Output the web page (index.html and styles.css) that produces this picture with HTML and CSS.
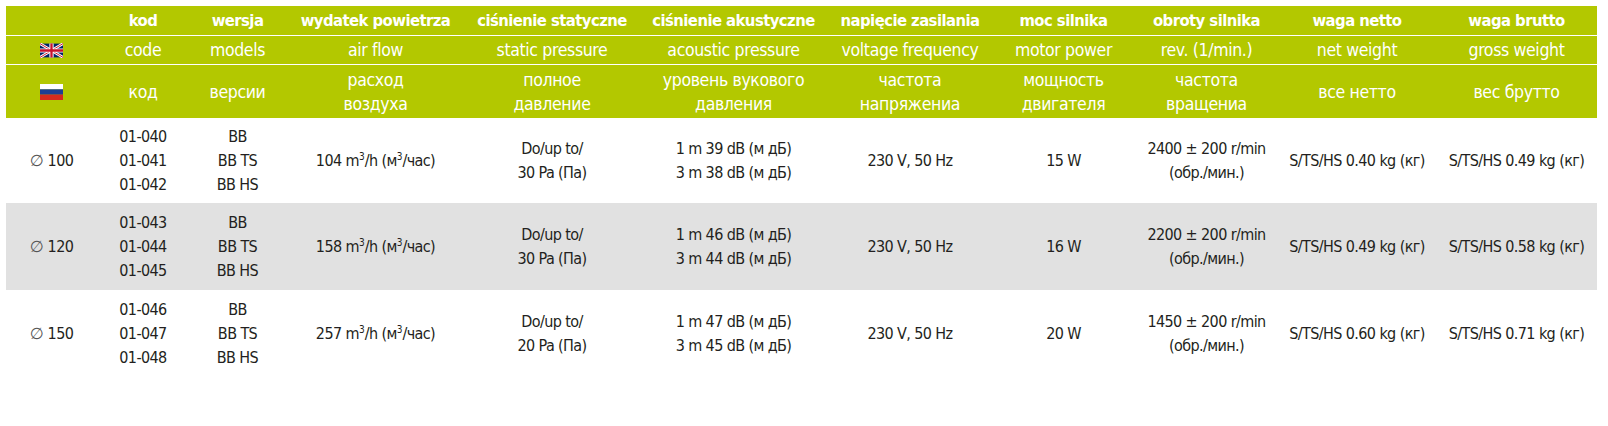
FILE: index.html
```html
<!DOCTYPE html>
<html lang="pl">
<head>
<meta charset="utf-8">
<title>Dane techniczne</title>
<link rel="stylesheet" href="styles.css">
</head>
<body>
<table class="spec">
  <colgroup>
    <col class="c-flag"><col class="c-kod"><col class="c-ver"><col class="c-air"><col class="c-stat"><col class="c-ac"><col class="c-volt"><col class="c-pow"><col class="c-rev"><col class="c-net"><col class="c-gross">
  </colgroup>
  <thead>
    <tr class="h-pl">
      <th></th><th>kod</th><th>wersja</th><th>wydatek powietrza</th><th>ciśnienie statyczne</th><th>ciśnienie akustyczne</th><th>napięcie zasilania</th><th>moc silnika</th><th>obroty silnika</th><th>waga netto</th><th>waga brutto</th>
    </tr>
    <tr class="h-en">
      <th>
        <svg class="flag" viewBox="0 0 60 36" width="23" height="15" aria-hidden="true">
          <rect width="60" height="36" fill="#012169"/>
          <path d="M0,0 L60,36 M60,0 L0,36" stroke="#fff" stroke-width="7"/>
          <path d="M0,0 L60,36 M60,0 L0,36" stroke="#c8102e" stroke-width="2.5"/>
          <path d="M30,0 V36 M0,18 H60" stroke="#fff" stroke-width="11"/>
          <path d="M30,0 V36 M0,18 H60" stroke="#c8102e" stroke-width="6"/>
        </svg>
      </th>
      <th>code</th><th>models</th><th>air flow</th><th>static pressure</th><th>acoustic pressure</th><th>voltage frequency</th><th>motor power</th><th>rev. (1/min.)</th><th>net weight</th><th>gross weight</th>
    </tr>
    <tr class="h-ru">
      <th>
        <svg class="flag" viewBox="0 0 23 16" width="23" height="16" aria-hidden="true">
          <rect width="23" height="5.4" fill="#ffffff"/>
          <rect y="5.3" width="23" height="5.4" fill="#1c3f94"/>
          <rect y="10.6" width="23" height="5.4" fill="#d52b1e"/>
        </svg>
      </th>
      <th>код</th><th>версии</th><th>расход<br>воздуха</th><th>полное<br>давление</th><th>уровень вукового<br>давления</th><th>частота<br>напряжениа</th><th>мощность<br>двигателя</th><th>частота<br>вращениа</th><th>все нетто</th><th>вес брутто</th>
    </tr>
  </thead>
  <tbody>
    <tr class="r1">
      <td><span class="dia">∅</span> 100</td>
      <td>01-040<br>01-041<br>01-042</td>
      <td>BB<br>BB TS<br>BB HS</td>
      <td>104 m<sup>3</sup>/h (м<sup>3</sup>/час)</td>
      <td>Do/up to/<br>30 Pa (Па)</td>
      <td>1 m 39 dB (м дБ)<br>3 m 38 dB (м дБ)</td>
      <td>230 V, 50 Hz</td>
      <td>15 W</td>
      <td>2400 ± 200 r/min<br>(обр./мин.)</td>
      <td>S/TS/HS 0.40 kg (кг)</td>
      <td>S/TS/HS 0.49 kg (кг)</td>
    </tr>
    <tr class="alt">
      <td><span class="dia">∅</span> 120</td>
      <td>01-043<br>01-044<br>01-045</td>
      <td>BB<br>BB TS<br>BB HS</td>
      <td>158 m<sup>3</sup>/h (м<sup>3</sup>/час)</td>
      <td>Do/up to/<br>30 Pa (Па)</td>
      <td>1 m 46 dB (м дБ)<br>3 m 44 dB (м дБ)</td>
      <td>230 V, 50 Hz</td>
      <td>16 W</td>
      <td>2200 ± 200 r/min<br>(обр./мин.)</td>
      <td>S/TS/HS 0.49 kg (кг)</td>
      <td>S/TS/HS 0.58 kg (кг)</td>
    </tr>
    <tr>
      <td><span class="dia">∅</span> 150</td>
      <td>01-046<br>01-047<br>01-048</td>
      <td>BB<br>BB TS<br>BB HS</td>
      <td>257 m<sup>3</sup>/h (м<sup>3</sup>/час)</td>
      <td>Do/up to/<br>20 Pa (Па)</td>
      <td>1 m 47 dB (м дБ)<br>3 m 45 dB (м дБ)</td>
      <td>230 V, 50 Hz</td>
      <td>20 W</td>
      <td>1450 ± 200 r/min<br>(обр./мин.)</td>
      <td>S/TS/HS 0.60 kg (кг)</td>
      <td>S/TS/HS 0.71 kg (кг)</td>
    </tr>
  </tbody>
</table>
</body>
</html>
```

FILE: styles.css
```css
html, body {
  margin: 0;
  padding: 0;
  background: #ffffff;
}

body {
  padding: 6px 0 0 6px;
  font-family: "DejaVu Sans Condensed", "DejaVu Sans", "Liberation Sans", sans-serif;
  color: #231f20;
}

.spec {
  border-collapse: collapse;
  table-layout: fixed;
  width: 1591px;
  font-size: 16px;
  letter-spacing: -0.6px;
}

.c-flag { width: 91px; }
.c-kod { width: 92px; }
.c-ver { width: 97px; }
.c-air { width: 179px; }
.c-stat { width: 174px; }
.c-ac { width: 189px; }
.c-volt { width: 164px; }
.c-pow { width: 143px; }
.c-rev { width: 143px; }
.c-net { width: 158px; }
.c-gross { width: 161px; }

.spec th,
.spec td {
  padding: 0;
  text-align: center;
  vertical-align: middle;
  white-space: nowrap;
}

.spec thead th {
  background: #b3c800;
  color: #ffffff;
  font-weight: normal;
  font-size: 17.5px;
  letter-spacing: -0.35px;
  line-height: 24px;
}

.spec .h-pl th {
  height: 29px;
  font-weight: bold;
  font-size: 16.5px;
  letter-spacing: -0.55px;
  border-bottom: 1px solid #ffffff;
}

.spec .h-en th {
  height: 28px;
  border-bottom: 1px solid #ffffff;
}

.spec .h-ru th {
  height: 53px;
}

.flag {
  display: block;
  margin: 0 auto;
}

.spec tbody td {
  height: 87px;
  line-height: 24px;
}

.spec tbody tr.r1 td {
  height: 85px;
}

.spec tbody tr.alt td {
  background: #e1e1e1;
}

.dia {
  font-family: "DejaVu Sans", sans-serif;
  font-weight: normal;
  color: #555555;
  font-size: 16px;
  letter-spacing: 0;
}

sup {
  font-size: 10px;
  line-height: 0;
  letter-spacing: 0;
  vertical-align: 6px;
}
```
